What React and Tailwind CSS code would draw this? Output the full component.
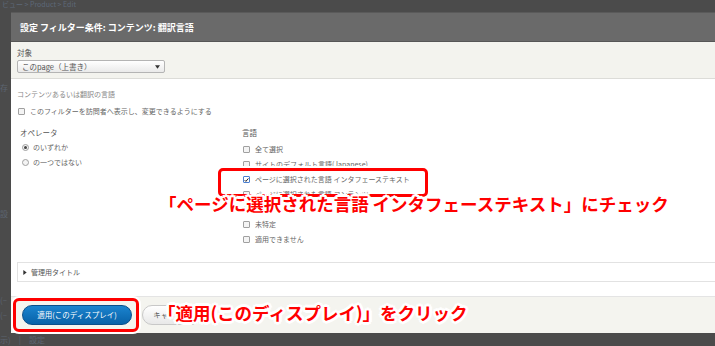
import React from 'react';

const halo =
  '[text-shadow:2px_0_0_#fff,-2px_0_0_#fff,0_2px_0_#fff,0_-2px_0_#fff,2px_2px_0_#fff,-2px_-2px_0_#fff,2px_-2px_0_#fff,-2px_2px_0_#fff,3px_0_0_#fff,-3px_0_0_#fff,0_3px_0_#fff,0_-3px_0_#fff]';

const Checkbox = ({ checked }) => (
  <span
    className={`inline-flex w-[7px] h-[7px] shrink-0 items-center justify-center rounded-[1px] border ${
      checked ? 'border-[#4a7fd0] bg-white' : 'border-[#a0a0a0] bg-[#f4f4f4]'
    }`}
  >
    {checked && (
      <svg viewBox="0 0 8 8" className="w-[6px] h-[6px]">
        <path d="M1 4.2 L3 6.2 L7 1.5" fill="none" stroke="#222" strokeWidth="1.6" />
      </svg>
    )}
  </span>
);

const Radio = ({ checked }) => (
  <span className="inline-flex w-[7px] h-[7px] shrink-0 items-center justify-center rounded-full border border-[#a0a0a0] bg-[#f4f4f4]">
    {checked && <span className="w-[3px] h-[3px] rounded-full bg-[#444]" />}
  </span>
);

const CheckRow = ({ label, checked }) => (
  <div className="h-[15px] flex items-center gap-[5px]">
    <Checkbox checked={checked} />
    <span className="text-[7px] text-[#666] leading-none whitespace-nowrap">{label}</span>
  </div>
);

const languages = [
  { label: '全て選択' },
  { label: 'サイトのデフォルト言語(Japanese)' },
  { label: 'ページに選択された言語 インタフェーステキスト', checked: true },
  { label: 'ページに選択された言語 コンテンツ' },
  { label: 'English' },
  { label: '未特定' },
  { label: '適用できません' },
];

export default function App() {
  return (
    <div className="relative w-[715px] h-[346px] overflow-hidden bg-[#4b4b4b] font-['Noto_Sans_CJK_JP','Liberation_Sans',sans-serif]">
      {/* page behind the overlay */}
      <div className="h-[12px] pl-[2px] text-[7px] leading-[9px] text-[#5d6878] whitespace-nowrap">
        ビュー &gt; Product &gt; Edit
      </div>

      <div className="flex h-[321px]">
        <div className="w-[11px] shrink-0 flex flex-col text-[8px] text-[#5c6470] leading-none">
          <span className="mt-[72px]">存</span>
          <span className="mt-[118px]">設</span>
          <span className="mt-[78px]">(–</span>
          <span className="mt-[7px]">(–</span>
        </div>

        {/* dialog */}
        <div className="flex-1 flex flex-col bg-white">
          <div className="h-[30px] bg-[#6a6a6a] border-t border-[#5a5a5a] border-b border-b-[#565656] flex items-center pl-[9px]">
            <span className="text-[9px] font-bold text-white leading-none whitespace-nowrap">
              設定 フィルター条件: コンテンツ: 翻訳言語
            </span>
          </div>

          <div className="h-[37px] bg-[#f3f3ee] border-b border-[#dcdcd8] pl-[6px] pt-[6px]">
            <div className="text-[7.5px] text-[#555] leading-[9px]">対象</div>
            <div className="mt-[3px] w-[148px] h-[13px] border border-[#b4b4b4] rounded-[2px] bg-gradient-to-b from-white to-[#eaeaea] flex items-center justify-between px-[4px]">
              <span className="text-[7.5px] text-[#555] leading-none">このpage（上書き）</span>
              <svg viewBox="0 0 6 4" className="w-[5px] h-[4px]">
                <path d="M0 0 H6 L3 4 Z" fill="#333" />
              </svg>
            </div>
          </div>

          <div className="flex-1 pl-[6px] pt-[10px] flex flex-col">
            <div className="h-[10px] flex items-center text-[7px] text-[#888] leading-none">
              コンテンツあるいは翻訳の言語
            </div>
            <div className="mt-[7px] h-[10px] flex items-center gap-[5px] pl-[1px]">
              <Checkbox />
              <span className="text-[7px] text-[#666] leading-none">
                このフィルターを訪問者へ表示し、変更できるようにする
              </span>
            </div>

            <div className="mt-[12px] flex">
              <div className="w-[222px] pl-[3px]">
                <div className="h-[10px] flex items-center text-[7.5px] text-[#555] leading-none">オペレータ</div>
                <div className="mt-[2px] pl-[2px]">
                  <div className="h-[15px] flex items-center gap-[4px]">
                    <Radio checked />
                    <span className="text-[7px] text-[#666] leading-none">のいずれか</span>
                  </div>
                  <div className="h-[15px] flex items-center gap-[4px]">
                    <Radio />
                    <span className="text-[7px] text-[#666] leading-none">の一つではない</span>
                  </div>
                </div>
              </div>
              <div className="pl-[3px]">
                <div className="h-[10px] flex items-center text-[7.5px] text-[#555] leading-none">言語</div>
                <div className="mt-[4px] pl-[1px]">
                  {languages.map((l) => (
                    <CheckRow key={l.label} label={l.label} checked={l.checked} />
                  ))}
                </div>
              </div>
            </div>

            <div className="mt-[15px] h-[20px] border-y border-l border-[#e2e2e2] flex items-center pl-[5px] gap-[4px]">
              <svg viewBox="0 0 4 6" className="w-[4px] h-[5px]">
                <path d="M0 0 L4 3 L0 6 Z" fill="#333" />
              </svg>
              <span className="text-[7px] text-[#555] leading-none">管理用タイトル</span>
            </div>
          </div>

          <div className="h-[37px] bg-[#f4f4ef] border-t border-[#e4e4e4] pl-[11px] pt-[8px] flex gap-[10px]">
            <button className="w-[110px] h-[20px] rounded-full border border-[#0a4f8a] bg-gradient-to-b from-[#1b84cf] to-[#0862a8] text-white text-[7.5px] leading-none">
              適用(このディスプレイ)
            </button>
            <button className="w-[60px] h-[20px] rounded-full border border-[#c8c8c8] bg-gradient-to-b from-white to-[#e8e8e8] text-[#555] text-[7.5px] leading-none">
              キャンセル
            </button>
          </div>
        </div>
      </div>

      <div className="h-[13px] flex items-center text-[8px] text-[#5c6470] leading-none whitespace-nowrap">
        <span>示)</span>
        <span className="ml-[8px]">|</span>
        <span className="ml-[8px]">設定</span>
      </div>

      {/* annotations */}
      <div className="absolute left-[218px] top-[168px] w-[210px] h-[29px] border-[3px] border-[#ff0000] rounded-[5px] shadow-[0_0_0_2px_#fff]" />
      <div
        className={`absolute left-[159px] top-[192px] text-[17.5px] font-bold text-[#ff0000] leading-[24px] whitespace-nowrap ${halo}`}
      >
        「ページに選択された言語 インタフェーステキスト」にチェック
      </div>

      <div className="absolute left-[13px] top-[298px] w-[126px] h-[34px] border-[3px] border-[#ff0000] rounded-[6px] shadow-[0_0_0_2px_#fff]" />
      <div
        className={`absolute left-[158px] top-[301px] text-[17.5px] font-bold text-[#ff0000] leading-[24px] whitespace-nowrap ${halo}`}
      >
        「適用(このディスプレイ)」をクリック
      </div>
    </div>
  );
}
